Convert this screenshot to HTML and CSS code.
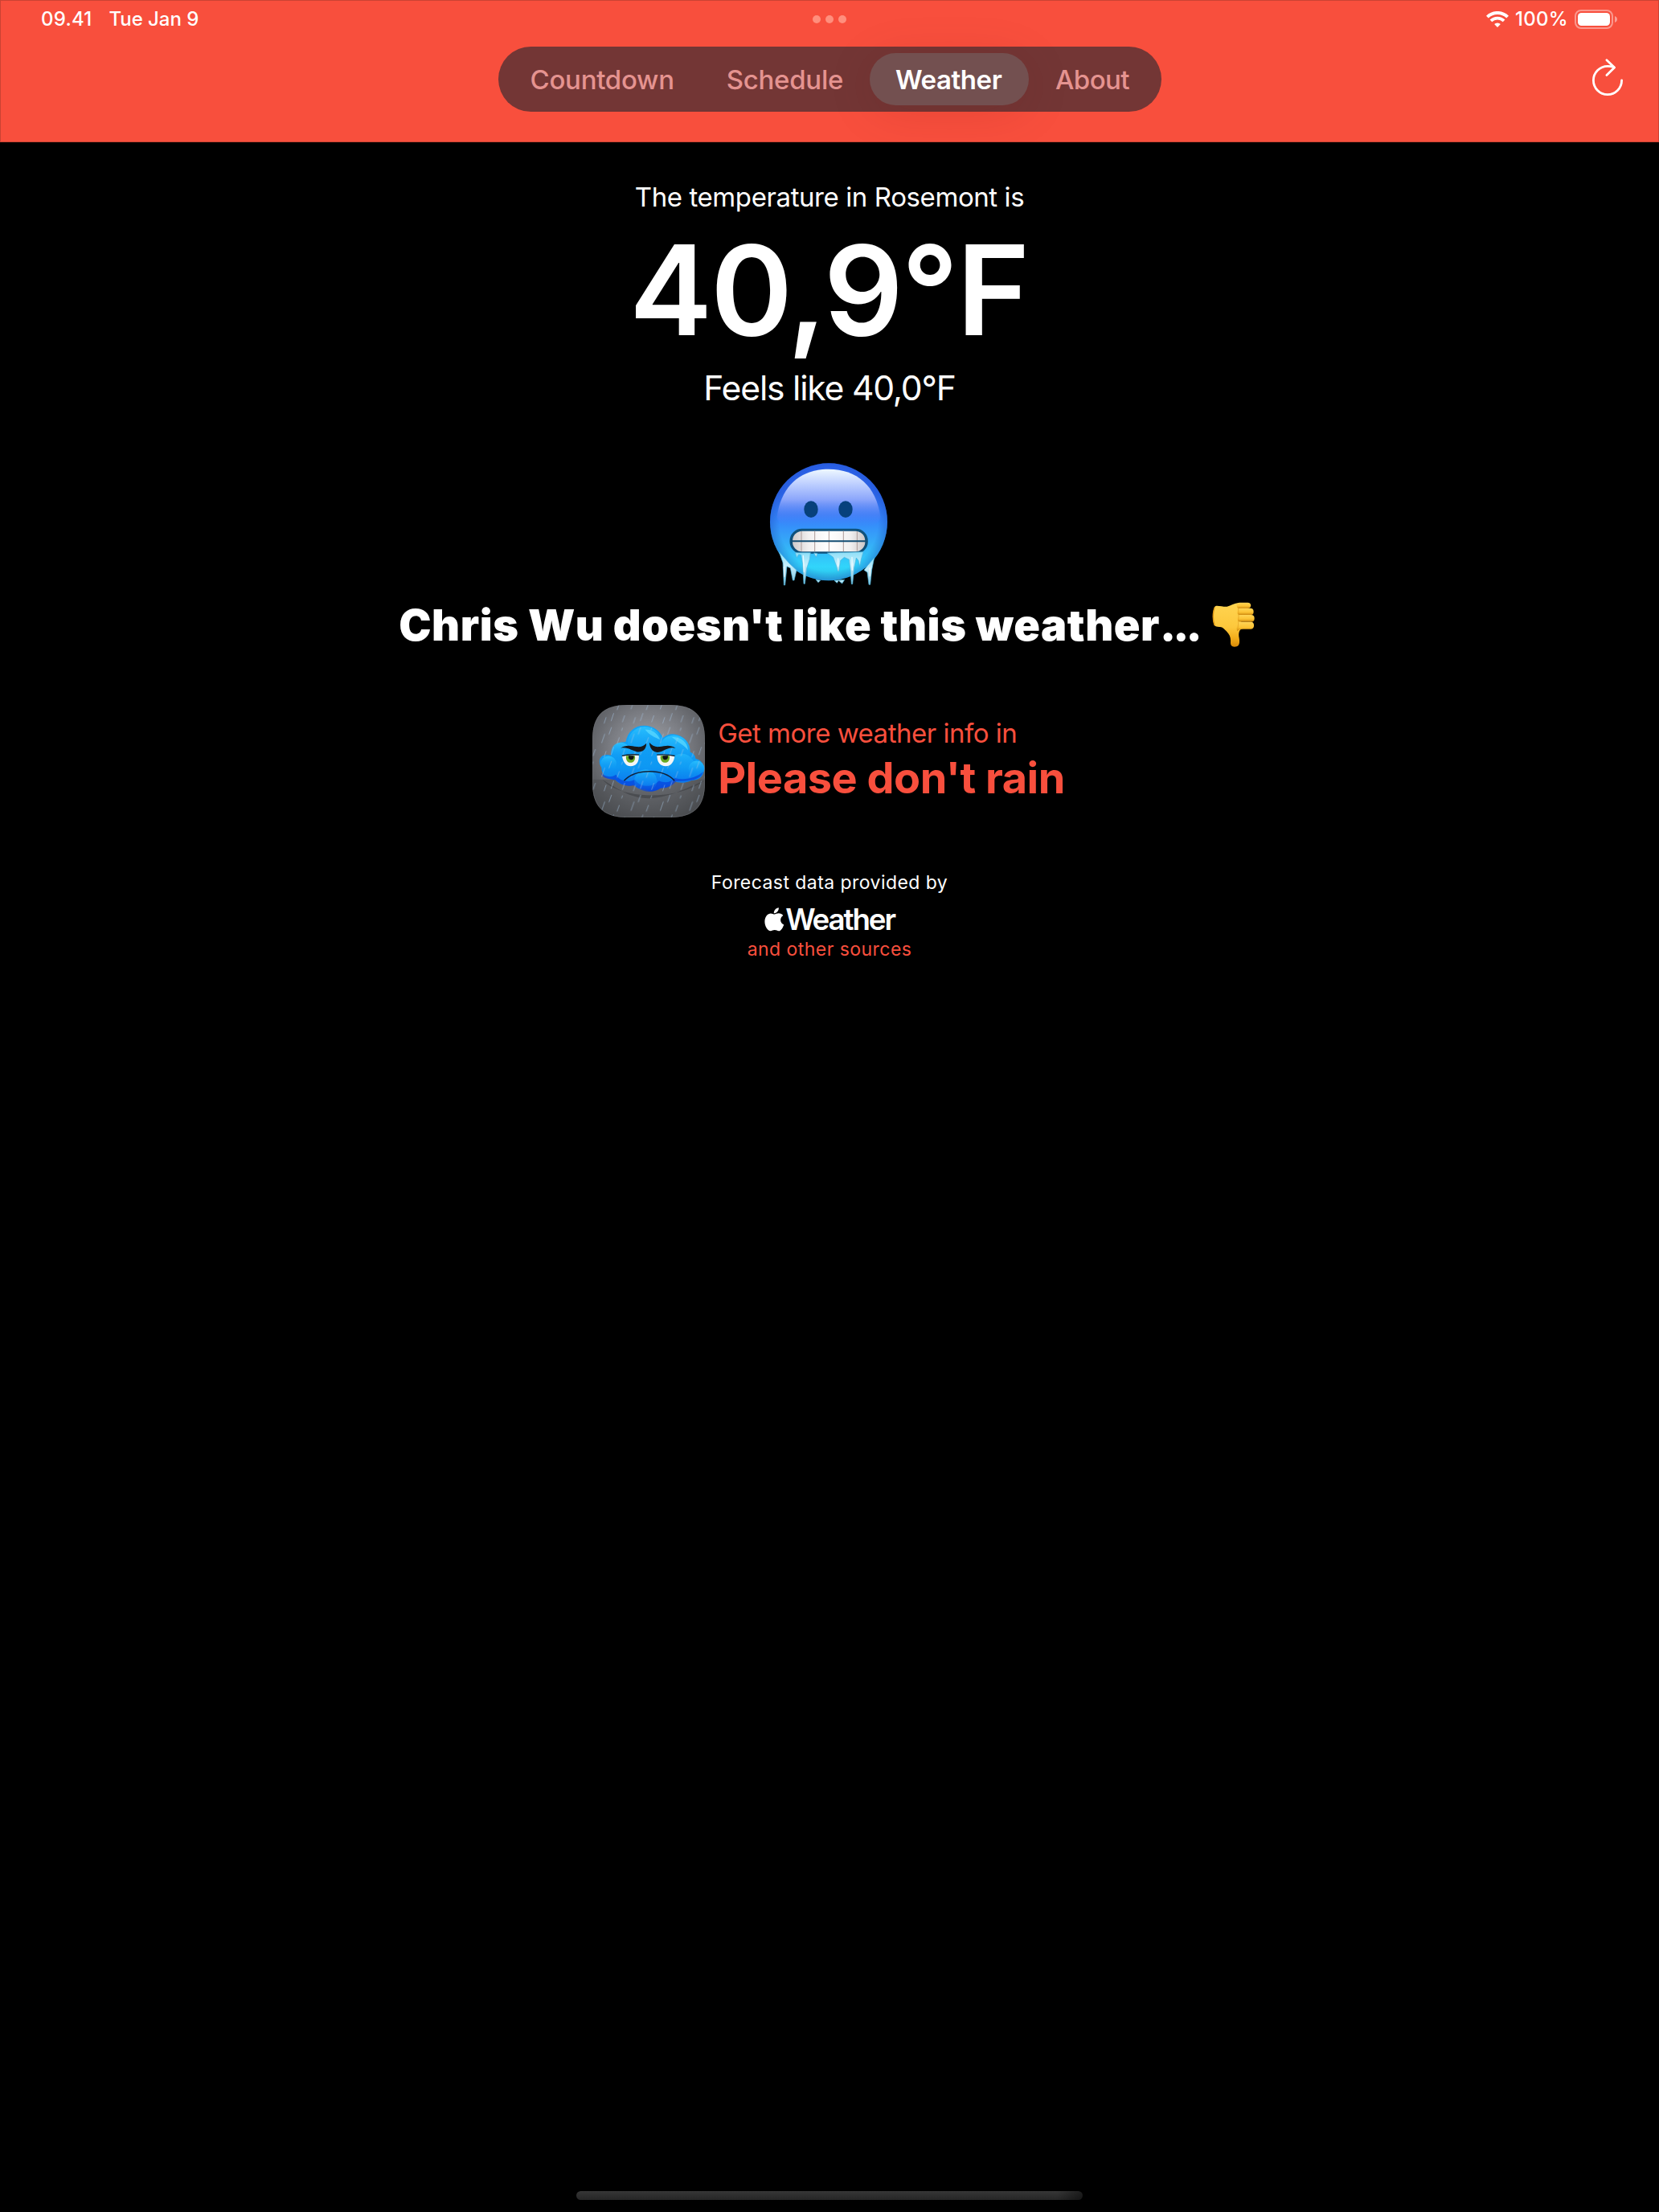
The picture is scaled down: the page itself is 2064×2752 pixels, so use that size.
FILE: index.html
```html
<!DOCTYPE html>
<html lang="en">
<head>
<meta charset="utf-8">
<title>Weather</title>
<link rel="stylesheet" href="styles.css">
</head>
<body>
<header class="header">
  <div class="status">
    <div class="status-left"><span class="time">09.41</span><span class="date">Tue Jan 9</span></div>
    <div class="dots"><i></i><i></i><i></i></div>
    <div class="status-right">
      <svg class="wifi" width="28" height="20" viewBox="0 0 28 20" fill="none" stroke="#fff">
        <path d="M1.4 7.1a18 18 0 0 1 25.2 0" stroke-width="4"/>
        <path d="M5.9 11.9a11.6 11.6 0 0 1 16.2 0" stroke-width="3.8"/>
        <path d="M14 20l-3.9-4a5.6 5.6 0 0 1 7.8 0z" fill="#fff" stroke="none"/>
      </svg>
      <span class="pct">100%</span>
      <svg class="battery" width="54" height="24" viewBox="0 0 54 24">
        <rect x="1" y="1" width="46" height="22" rx="7" fill="none" stroke="#fff" stroke-opacity=".42" stroke-width="2"/>
        <rect x="4" y="4" width="40" height="16" rx="4.5" fill="#fff"/>
        <path d="M50 8v8c1.900-.7 3-2.200 3-4s-1.100-3.300-3-4z" fill="#fff" fill-opacity=".46"/>
      </svg>
    </div>
  </div>
  <div class="bar">
    <nav class="tabs">
      <a class="tab">Countdown</a><a class="tab">Schedule</a><a class="tab active">Weather</a><a class="tab about">About</a>
    </nav>
    <svg class="refresh" width="40" height="48" viewBox="0 0 40 48" fill="none" stroke="#fff" stroke-width="2.8" stroke-linecap="round" stroke-linejoin="round">
      <path d="M37.600 28A17.600 17.600 0 1 1 20 10.400c3 0 5.500.4 8 1.300"/>
      <path d="M18.900 2.800L28.600 12l-9.700 9.600"/>
    </svg>
  </div>
</header>

<main class="main">
  <p class="intro">The temperature in Rosemont is</p>
  <p class="temp">40,9°F</p>
  <p class="feels">Feels like 40,0°F</p>

  <svg class="face" width="220" height="180" viewBox="0 0 660 540">
    <defs>
      <linearGradient id="skin" x1="0" y1="0" x2="0" y2="1">
        <stop offset="0" stop-color="#2f63f2"/><stop offset=".25" stop-color="#2e65ee"/><stop offset=".48" stop-color="#3585fb"/><stop offset=".72" stop-color="#35b4f7"/><stop offset=".88" stop-color="#31d5fb"/><stop offset="1" stop-color="#2cbfe4"/>
      </linearGradient>
      <linearGradient id="gloss" x1="0" y1="0" x2="0" y2="1">
        <stop offset="0" stop-color="#eef8ff"/><stop offset=".2" stop-color="#c6d6ff"/><stop offset=".5" stop-color="#8aa5fb"/><stop offset=".75" stop-color="#5583f5" stop-opacity=".5"/><stop offset=".95" stop-color="#3d86fa" stop-opacity="0"/>
      </linearGradient>
      <radialGradient id="rim"><stop offset=".84" stop-color="#1a55b8" stop-opacity="0"/><stop offset="1" stop-color="#1a50c0" stop-opacity=".4"/></radialGradient>
      <linearGradient id="teeth" x1="0" x2="1"><stop offset="0" stop-color="#cfcbcb"/><stop offset=".22" stop-color="#f1efef"/><stop offset=".5" stop-color="#fff"/><stop offset=".8" stop-color="#f1efef"/><stop offset="1" stop-color="#cbc7c7"/></linearGradient>
      <linearGradient id="ice" x1="0" y1="0" x2="0" y2="1"><stop offset="0" stop-color="#8edff8"/><stop offset=".4" stop-color="#c6effc"/><stop offset="1" stop-color="#7cc2e0"/></linearGradient>
    </defs>
    <circle cx="333" cy="268" r="219" fill="url(#skin)"/>
    <circle cx="333" cy="268" r="219" fill="url(#rim)"/>
    <path d="M333 71c104 0 178 62 193 178 0 30-62 52-193 52s-193-22-193-52C155 133 229 71 333 71z" fill="url(#gloss)"/>
    <ellipse cx="267" cy="221" rx="26" ry="31" fill="#07417c"/>
    <ellipse cx="396" cy="221" rx="26" ry="31" fill="#07417c"/>
    <rect x="191" y="297" width="285" height="86" rx="42" fill="#0e4d77" stroke="#0f527c" stroke-width="7"/>
    <rect x="198" y="302" width="271" height="77" rx="36" fill="url(#teeth)"/>
    <path d="M231 303v74M281 302v77M334 302v77M388 302v77M439 303v74" stroke="#ac9b98" stroke-width="3"/>
    <path d="M196 340h275" stroke="#124c72" stroke-width="6"/>
    <g fill="url(#ice)" stroke="#4eb5dc" stroke-width="2" stroke-linejoin="round">
      <path d="M208 383l6 18 7-12 9 2 6 36 4 72h4l7-58 11-34 3-24z"/>
      <path d="M278 384l8 16 5-14z"/>
      <path d="M328 384l22 16 11 30 6 22h4l6-40 14-12 18 8 5 38 4 54h4l6-62 8-36 8 10 5 20 5-24 8-28z"/>
      <path d="M148 380l14 40 4 84h4l7-70 13 6 9 46h5l9-38-26-24z"/>
      <path d="M503 402l-24 28-14 18 12 8 6 46h5l6-56z"/>
      <path d="M285 483l9 11 8-8zM354 487l10 9 6-9 13 11 9-14z"/>
    </g>
    <path d="M238 394l3 60M166 436l2 36M420 400l1 48M486 440l1 30M368 405v28" stroke="#fff" stroke-width="4" stroke-opacity=".75" stroke-linecap="round"/>
  </svg>

  <div class="verdict">
    <p class="verdict-text">Chris Wu doesn't like this weather<span class="ell">...</span></p>
    <svg class="thumb" width="54" height="58" viewBox="1299 55 157 174" preserveAspectRatio="none">
      <defs>
        <linearGradient id="hand" x1="0" y1="0" x2="0" y2="1"><stop offset="0" stop-color="#ffd451"/><stop offset=".55" stop-color="#fdc83c"/><stop offset=".8" stop-color="#f3ae1c"/><stop offset="1" stop-color="#d98a07"/></linearGradient>
        <linearGradient id="finger" x1="0" y1="0" x2="0" y2="1"><stop offset="0" stop-color="#ffd557"/><stop offset=".6" stop-color="#fcc233"/><stop offset="1" stop-color="#c8820a"/></linearGradient>
      </defs>
      <path d="M1317 72c12 0 24 4 36 3 14-4 26-13 42-14l12 20-4 78c-8 8-9 20-6 34 3 20 0 32-17 32-12 0-15-9-14-19 1-15-3-26-14-38-9-9-14-16-24-17-9 1-16-2-20-5-8-20-8-48 0-69 2-4 5-5 9-5z" fill="url(#hand)"/>
      <path d="M1308 78c-7 22-7 46 0 67" fill="none" stroke="#dc9411" stroke-width="4"/>
      <rect x="1388" y="60" width="51" height="22" rx="11" fill="url(#finger)"/>
      <rect x="1390" y="81" width="59" height="26" rx="12" fill="url(#finger)"/>
      <rect x="1391" y="106" width="61" height="26" rx="12" fill="url(#finger)"/>
      <path d="M1396 132h44c14 0 14 26 0 27h-30c-10 0-16 3-20 8-4-16-4-27 6-35z" fill="url(#finger)"/>
      <path d="M1393 80c4 26 2 50-1 78" fill="none" stroke="#dd9a1b" stroke-width="3" stroke-opacity=".6"/>
    </svg>
  </div>

  <div class="promo">
    <svg class="app-icon" width="140" height="140" viewBox="52 52 419 419">
      <defs>
        <radialGradient id="sky" cx=".5" cy=".4" r=".68"><stop offset="0" stop-color="#a4a6ac"/><stop offset=".5" stop-color="#7a7c82"/><stop offset="1" stop-color="#4c4e52"/></radialGradient>
        <linearGradient id="cloud" x1="0" y1="130" x2="0" y2="385" gradientUnits="userSpaceOnUse"><stop offset="0" stop-color="#12a4f6"/><stop offset=".6" stop-color="#0d98f3"/><stop offset=".85" stop-color="#0b78ee"/><stop offset="1" stop-color="#0848d8"/></linearGradient>
        <linearGradient id="puff" x1="0" y1="0" x2="0" y2="1"><stop offset="0" stop-color="#29c0fe"/><stop offset="1" stop-color="#0a90f2" stop-opacity="0"/></linearGradient>
        <pattern id="rain" width="109" height="126" patternUnits="userSpaceOnUse">
          <path d="M14 10l-9 25M43 48l-8 22M98 35l-11 32M22 84l-9 27M63 92l-8 23M55 12l-3 9M103 99l-7 21" stroke="#a6c5e2" stroke-width="2.600" stroke-opacity=".6" stroke-linecap="round" fill="none"/>
        </pattern>
        <clipPath id="tile"><path d="M182 52h159c90 0 130 40 130 130v159c0 90-40 130-130 130H182c-90 0-130-40-130-130V182C52 92 92 52 182 52z"/></clipPath>
      </defs>
      <g clip-path="url(#tile)">
        <rect x="52" y="52" width="419" height="419" fill="url(#sky)"/>
        <rect x="52" y="330" width="419" height="141" fill="#46484b" fill-opacity=".4"/>
        <path d="M90 330c60 70 260 85 380 5-60 20-120 62-210 65-70 0-120-40-170-70z" fill="#35373c" fill-opacity=".5"/>
        <path d="M176 190c8-40 34-61 68-61 36 0 60 20 71 46 18-18 44-18 65-7 24 12 36 34 36 60 12 4 20 13 20 24 18 4 30 18 33 36-2 32-22 46-48 45-22 10-46 12-66 2-10 20-30 28-50 26-16 14-40 16-58 4-18 0-34-6-43-16-22 8-54 0-68-20-26 4-52-16-50-44-14-18-8-44 12-46 8-2 16-1 23 1-2-26 20-50 55-50z" fill="url(#cloud)"/>
        <path d="M84 306c14 14 38 18 56 6 14 28 50 28 70 18 24 34 70 28 90 4 24 12 46 4 58-10 40 10 80 0 108-24-6 26-40 38-102 36-18 20-34 26-56 26-32 20-66 18-100-10-28 6-48-2-70-20-26-4-46-4-54-26z" fill="#0742dc" fill-opacity=".7"/>
        <circle cx="247" cy="197" r="64" fill="url(#puff)"/>
        <circle cx="356" cy="225" r="60" fill="url(#puff)"/>
        <circle cx="158" cy="228" r="36" fill="url(#puff)"/>
        <circle cx="112" cy="272" r="30" fill="url(#puff)"/>
        <circle cx="440" cy="290" r="30" fill="url(#puff)"/>
        <circle cx="385" cy="282" r="48" fill="url(#puff)" fill-opacity=".6"/>
        <circle cx="250" cy="335" r="42" fill="url(#puff)" fill-opacity=".7"/>
        <path d="M248 143c26 0 46 14 56 38-18-8-40-16-56-38zM348 172c32-2 58 18 60 48-14-18-38-28-60-48z" fill="#5fdcff" fill-opacity=".7"/>
        <rect x="52" y="52" width="419" height="419" fill="url(#rain)"/>
        <path d="M163 244c8-6 44-6 62-6 2 26-10 42-31 42-16 0-27-14-31-36z" fill="#f4f6f5"/>
        <path d="M358 244c-8-6-44-6-65-6-2 26 12 42 32 42 18 0 30-14 33-36z" fill="#f4f6f5"/>
        <path d="M178 241h32c4 14-4 26-16 26s-19-12-16-26zM306 241h33c3 14-4 26-16 26s-20-12-17-26z" fill="#69a823"/>
        <path d="M187 241h19c2 9-3 15-9 15-7 0-12-6-10-15zM314 241h19c2 9-4 15-10 15s-11-6-9-15z" fill="#111"/>
        <path d="M162 242c20-6 42-6 64-4M292 238c24-2 44-2 67 4" fill="none" stroke="#14202c" stroke-width="4"/>
        <path d="M157 213c20-14 40-8 60-5 16 2 28-4 36-13 0 22-14 34-34 32-20-4-36-20-62-14zM362 213c-20-14-40-8-60-5-16 2-28-4-38-16 2 26 16 38 36 36 20-4 36-22 62-15z" fill="#17181c"/>
        <path d="M170 334c44-46 146-46 188 0" fill="none" stroke="#102139" stroke-width="4.500"/>
      </g>
      <path d="M182 53h159c89 0 129 40 129 129v159c0 89-40 129-129 129H182c-89 0-129-40-129-129V182C53 93 93 53 182 53z" fill="none" stroke="#77797d" stroke-width="2.500" stroke-opacity=".5"/>
    </svg>
    <div class="promo-text">
      <p class="promo-lead">Get more weather info in</p>
      <p class="promo-name">Please don't rain</p>
    </div>
  </div>

  <p class="credit">Forecast data provided by</p>
  <div class="brand">
    <svg width="25" height="30" viewBox="0 0 25 30" fill="#fff">
      <path d="M17.800.3c.2 2-.5 3.700-1.700 5-1.200 1.300-2.700 2.100-4.300 2-.2-1.900.6-3.600 1.700-4.800C14.700 1.200 16.400.4 17.800.3z"/>
      <path d="M12.500 8.500c1.300 0 2.900-1.200 5.300-1.200 2.300 0 4.300 1 5.500 2.700-4.700 2.900-4 9.500 1 11.400-1 2.600-3.300 7.900-6.400 7.900-1.900 0-2.700-1.200-5.100-1.200s-3.300 1.200-5 1.200C3.900 29.300.4 23.500.4 17.600c0-6.200 3.800-10.200 7.500-10.200 2 0 3.600 1.100 4.600 1.100z"/>
    </svg>
    <span class="brand-name">Weather</span>
  </div>
  <p class="sources">and other sources</p>
</main>
<footer class="home"></footer>
</body>
</html>
```
FILE: styles.css
```css
* { box-sizing: border-box; }
body {
  margin: 0;
  width: 2064px;
  height: 2752px;
  display: flex;
  flex-direction: column;
  background: #000;
  color: #fff;
  font-family: Inter, "Liberation Sans", sans-serif;
}
p { margin: 0; white-space: nowrap; }
svg { display: block; flex: none; }

.header {
  height: 177px;
  flex: none;
  background: #f84f3d;
  border: 1px solid #cb4333;
  overflow: hidden;
}
.status {
  height: 46px;
  display: grid;
  grid-template-columns: 1fr auto 1fr;
  align-items: center;
  padding: 0 50px 0 50px;
  font-size: 24px;
  font-weight: 500;
  line-height: 30px;
}
.status-left { display: flex; gap: 21px; }
.time { letter-spacing: .23px; }
.date { letter-spacing: -.05px; }
.dots { display: flex; gap: 6px; }
.dots i { width: 10px; height: 10px; border-radius: 50%; background: #ff8f7d; }
.status-right { display: flex; align-items: center; justify-content: flex-end; }
.pct { letter-spacing: .3px; margin: 0 8px; }

.bar {
  display: grid;
  grid-template-columns: 1fr auto 1fr;
  align-items: start;
  padding: 11px 43px 0;
}
.tabs {
  grid-column: 2;
  display: flex;
  width: 825px;
  height: 81px;
  padding: 8px 6px 8px 8px;
  border-radius: 41px;
  background: #733635;
}
.tab {
  height: 65px;
  padding: 1px 33px 0 32px;
  border-radius: 33px;
  font-size: 33px;
  font-weight: 500;
  line-height: 64px;
  letter-spacing: -.28px;
  color: #e59390;
}
.tab.active {
  width: 198px;
  padding: 1px 0 0 32px;
  color: #fff;
  font-weight: 600;
  letter-spacing: -.44px;
  background: #735050;
  box-shadow: 0 8px 60px rgba(100, 20, 10, .12);
}
.tab.about { padding-left: 33px; padding-right: 0; letter-spacing: -.6px; }
.refresh { justify-self: end; margin-top: 14px; }

.main { display: flex; flex-direction: column; align-items: center; padding-top: 48px; }
.intro { font-size: 33px; line-height: 40px; letter-spacing: -.41px; }
.temp { margin-top: 12px; margin-right: 2px; font-size: 155px; font-weight: 600; line-height: 168px; letter-spacing: -2.4px; }
.feels { margin-top: 12px; font-size: 42.6px; line-height: 52px; letter-spacing: -1.2px; }
.face { margin-top: 51px; margin-right: 4px; }

.verdict { display: flex; gap: 16px; margin: 5px 6px 0 0; }
.verdict-text { font-size: 54px; font-weight: 900; line-height: 66px; letter-spacing: .56px; }
.ell { letter-spacing: -3.9px; }
.thumb { margin-top: 3px; }

.promo { display: flex; gap: 16px; height: 124px; margin: 66px 2px 0 0; color: #f84f3d; }
.promo-text { padding-top: 15px; }
.promo-lead { font-size: 33px; line-height: 40px; letter-spacing: -.5px; }
.promo-name { margin-top: 3px; font-size: 54px; font-weight: 700; line-height: 66px; letter-spacing: -.5px; }

.credit { margin-top: 83px; font-size: 23px; line-height: 28px; letter-spacing: .44px; }
.brand { display: flex; align-items: center; gap: 1px; margin-top: 10px; }
.brand-name { font-size: 36.7px; font-weight: 600; line-height: 44px; letter-spacing: -2.1px; }
.sources { margin-top: 1px; font-size: 23px; line-height: 28px; letter-spacing: .45px; color: #f84f3d; }

.home {
  width: 630px;
  height: 11px;
  flex: none;
  margin: auto auto 15px;
  border-radius: 6px;
  background: linear-gradient(90deg, transparent 95%, rgba(0, 0, 0, .45)), linear-gradient(#363636, #262626);
}
```
